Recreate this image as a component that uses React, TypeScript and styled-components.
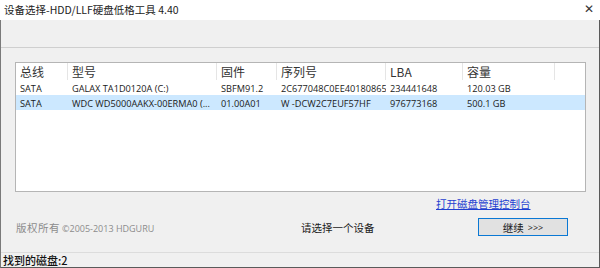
import styled, { createGlobalStyle } from "styled-components";

const GlobalStyle = createGlobalStyle`
  html, body {
    margin: 0;
    padding: 0;
    background: #f0f0f0;
  }
  * {
    box-sizing: border-box;
  }
`;

const Window = styled.div`
  width: 600px;
  height: 268px;
  display: flex;
  flex-direction: column;
  background: #f0f0f0;
  font-family: "Open Sans", "Noto Sans CJK SC", sans-serif;
  color: #1a1a1a;
  overflow: hidden;
`;

const TitleBar = styled.div`
  height: 20px;
  flex: none;
  display: flex;
  align-items: center;
  justify-content: space-between;
  background: #ffffff;
  padding: 0 6px 2px 4px;
`;

const Title = styled.span`
  font-family: "Noto Sans CJK SC", sans-serif;
  font-size: 10.5px;
  color: #222;
`;

const Close = styled.span`
  font-family: "DejaVu Sans", sans-serif;
  font-size: 12px;
  color: #333;
`;

const Body = styled.div`
  flex: 1;
  display: flex;
  flex-direction: column;
  border-left: 1px solid #7a7a7a;
  border-right: 1px solid #5a5a5a;
  border-bottom: 1px solid #5a5a5a;
`;

const Strip = styled.div`
  height: 28px;
  flex: none;
  border-bottom: 1px solid #cfcfcf;
`;

const Content = styled.div`
  flex: 1;
  display: flex;
  flex-direction: column;
  padding: 14px 13px 0 14px;
`;

const ListView = styled.div`
  height: 130px;
  flex: none;
  background: #ffffff;
  border: 1px solid #b5b5b5;
  display: flex;
  flex-direction: column;
`;

const Row = styled.div<{ $selected?: boolean }>`
  display: grid;
  grid-template-columns: 52px 149px 60px 109px 77px 92px;
  height: 15px;
  align-items: center;
  background: ${(p) => (p.$selected ? "#cce8ff" : "transparent")};
`;

const HeaderRow = styled(Row)`
  height: 17px;
`;

const HeaderCell = styled.div`
  height: 100%;
  display: flex;
  align-items: center;
  padding-left: 4px;
  border-right: 1px solid #e5e5e5;
  font-family: "Noto Sans CJK SC", sans-serif;
  font-size: 12px;
  color: #333;
`;

const Cell = styled.div`
  padding-left: 4px;
  padding-top: 1px;
  font-size: 9.2px;
  white-space: nowrap;
  overflow: hidden;
  color: #1a1a1a;
`;

const Footer = styled.div`
  flex: 1;
  display: grid;
  grid-template-columns: 286px 135px 1fr;
  grid-template-rows: auto auto;
  grid-template-areas:
    ". . link"
    "copy hint action";
  align-items: center;
  align-content: start;
  padding-top: 5px;
`;

const Copyright = styled.div`
  grid-area: copy;
  padding-left: 1px;
  color: #8c8c8c;
  font-family: "Noto Sans CJK SC", sans-serif;
  font-size: 10.5px;
  letter-spacing: 0.5px;
  display: flex;
  align-items: baseline;
  gap: 2px;
  padding-top: 7px;
`;

const SmallLatin = styled.span`
  font-family: "Open Sans", sans-serif;
  font-size: 9px;
  letter-spacing: 0;
`;

const Hint = styled.div`
  grid-area: hint;
  font-family: "Noto Sans CJK SC", sans-serif;
  font-size: 10.5px;
  color: #1a1a1a;
  padding-top: 7px;
`;

const Link = styled.a`
  grid-area: link;
  font-family: "Noto Sans CJK SC", sans-serif;
  font-size: 10.5px;
  color: #1f3fd0;
  text-decoration: underline;
  line-height: 14px;
`;

const Action = styled.div`
  grid-area: action;
  padding-left: 42px;
  padding-top: 7px;
`;

const Button = styled.button`
  width: 90px;
  height: 18px;
  border: 1px solid #0a78d4;
  background: #e1e1e1;
  display: flex;
  align-items: center;
  justify-content: center;
  gap: 4px;
  padding: 0;
  font-family: "Noto Sans CJK SC", sans-serif;
  font-size: 10.5px;
  color: #1a1a1a;
`;

const StatusBar = styled.div`
  height: 15px;
  flex: none;
  border-top: 1px solid #dcdcdc;
  display: flex;
  align-items: center;
  padding-left: 2px;
  font-family: "Noto Sans CJK SC", sans-serif;
  font-size: 11px;
  font-weight: 500;
  color: #111;
`;

const columns = ["总线", "型号", "固件", "序列号", "LBA", "容量"];

const disks = [
  ["SATA", "GALAX TA1D0120A (C:)", "SBFM91.2", "2C677048C0EE40180865", "234441648", "120.03 GB"],
  ["SATA", "WDC WD5000AAKX-00ERMA0 (...", "01.00A01", "W -DCW2C7EUF57HF", "976773168", "500.1 GB"],
];

export default function App() {
  return (
    <>
      <GlobalStyle />
      <Window>
        <TitleBar>
          <Title>设备选择-HDD/LLF硬盘低格工具 4.40</Title>
          <Close>✕</Close>
        </TitleBar>
        <Body>
          <Strip />
          <Content>
            <ListView>
              <HeaderRow>
                {columns.map((c) => (
                  <HeaderCell key={c}>{c}</HeaderCell>
                ))}
              </HeaderRow>
              {disks.map((d, i) => (
                <Row key={i} $selected={i === 1}>
                  {d.map((v, j) => (
                    <Cell key={j}>{v}</Cell>
                  ))}
                </Row>
              ))}
            </ListView>
            <Footer>
              <Link href="#">打开磁盘管理控制台</Link>
              <Copyright>
                版权所有 <SmallLatin>©2005-2013 HDGURU</SmallLatin>
              </Copyright>
              <Hint>请选择一个设备</Hint>
              <Action>
                <Button>
                  继续 <SmallLatin>&gt;&gt;&gt;</SmallLatin>
                </Button>
              </Action>
            </Footer>
          </Content>
          <StatusBar>找到的磁盘:2</StatusBar>
        </Body>
      </Window>
    </>
  );
}
